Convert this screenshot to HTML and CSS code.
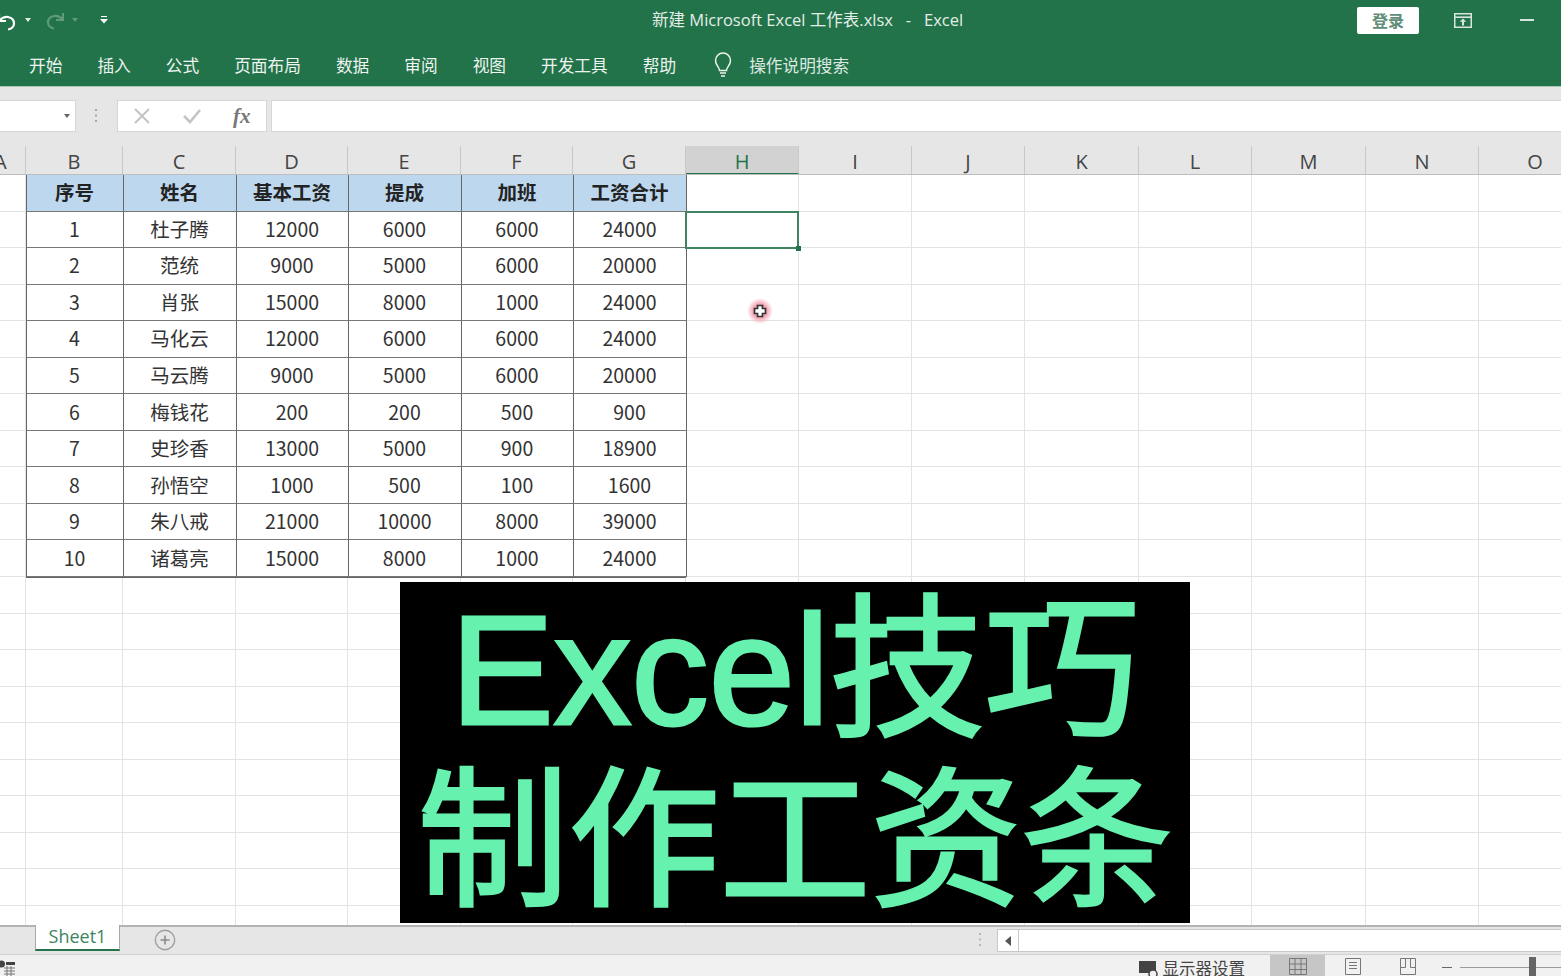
FILE: index.html
```html
<!DOCTYPE html>
<html lang="zh-CN">
<head>
  <meta charset="UTF-8">
  <title>新建 Microsoft Excel 工作表.xlsx - Excel</title>
  <link rel="stylesheet" href="styles.css">
</head>
<body>
  <!-- 标题栏 -->
  <header class="titlebar">
    <div class="qat">
      <svg class="qat-undo" width="19" height="20" viewBox="0 0 19 20"><path d="M1 3v7h7M1.500 9.500C4 6.500 7 5.500 10 6c4 .7 6 3.500 6 6.500s-2.500 5.500-6 6" fill="none" stroke="#fff" stroke-width="2.200"/></svg>
      <span class="caret"></span>
      <svg class="qat-redo" width="19" height="20" viewBox="0 0 19 20"><path d="M18 3v7h-7M17.500 9.500C15 6.500 12 5.500 9 6c-4 .7-6 3.500-6 6.500s2.500 5.500 6 6" fill="none" stroke="#5f9a7c" stroke-width="2.200"/></svg>
      <span class="caret caret-dim"></span>
      <svg class="qat-more" width="8" height="8" viewBox="0 0 8 8"><path d="M1 .5h6" stroke="#fff" stroke-width="1.200"/><path d="M0 3h8L4 7.500z" fill="#fff"/></svg>
    </div>
    <div class="doc-title">新建 Microsoft Excel 工作表.xlsx&nbsp;&nbsp;&nbsp;-&nbsp;&nbsp;&nbsp;Excel</div>
    <div class="win-controls">
      <button class="login">登录</button>
      <svg class="ribbon-opts" width="18" height="15" viewBox="0 0 18 15"><path d="M.75.75h16.500v13.500H.75z" fill="none" stroke="#d7e6dd" stroke-width="1.500"/><path d="M1 4.200h16" stroke="#d7e6dd" stroke-width="1.600"/><path d="M9 5.500l3.300 3.300H10v3.700H8V8.800H5.700z" fill="#d7e6dd"/></svg>
      <span class="minimize"></span>
    </div>
  </header>

  <!-- 功能区选项卡 -->
  <nav class="tabs">
    <span>开始</span>
    <span>插入</span>
    <span>公式</span>
    <span>页面布局</span>
    <span>数据</span>
    <span>审阅</span>
    <span>视图</span>
    <span>开发工具</span>
    <span>帮助</span>
    <span class="tell-me">
      <svg width="18" height="26" viewBox="0 0 18 26"><path d="M5.500 18.500c0-3.500-4-5-4-10a7.500 7.500 0 0 1 15 0c0 5-4 6.500-4 10z" fill="none" stroke="#eef4f0" stroke-width="1.500"/><path d="M6 21h6M7 24h4" stroke="#eef4f0" stroke-width="1.600"/></svg>
      操作说明搜索
    </span>
  </nav>

  <!-- 编辑栏 -->
  <div class="formula-bar">
    <div class="name-box"><span class="caret caret-gray"></span></div>
    <svg class="grip" width="4" height="15" viewBox="0 0 4 15"><path d="M2 1v2M2 6.500v2M2 12v2" stroke="#a8a8a8" stroke-width="2"/></svg>
    <div class="fx-box">
      <svg width="18" height="18" viewBox="0 0 18 18"><path d="M2 2l14 14M16 2L2 16" stroke="#c4c4c4" stroke-width="2"/></svg>
      <svg width="18" height="16" viewBox="0 0 18 16"><path d="M1 8l6 6L17 2" fill="none" stroke="#c4c4c4" stroke-width="2.600"/></svg>
      <span class="fx">fx</span>
    </div>
    <div class="formula-input"></div>
  </div>

  <!-- 列标 -->
  <div class="col-heads">
    <span class="col-a">A</span><span>B</span><span>C</span><span>D</span><span>E</span><span>F</span><span>G</span><span class="active">H</span><span>I</span><span>J</span><span>K</span><span>L</span><span>M</span><span>N</span><span>O</span>
  </div>

  <main class="sheet">
    <!-- 网格竖线 -->
    <div class="col-lines">
      <i></i><i></i><i></i><i></i><i></i><i></i><i></i><i></i><i></i><i></i><i></i><i></i><i></i><i></i><i></i>
    </div>

    <div class="pay-table">
      <div class="th">序号</div><div class="th">姓名</div><div class="th">基本工资</div><div class="th">提成</div><div class="th">加班</div><div class="th">工资合计</div>
      <div>1</div><div>杜子腾</div><div>12000</div><div>6000</div><div>6000</div><div>24000</div>
      <div>2</div><div>范统</div><div>9000</div><div>5000</div><div>6000</div><div>20000</div>
      <div>3</div><div>肖张</div><div>15000</div><div>8000</div><div>1000</div><div>24000</div>
      <div>4</div><div>马化云</div><div>12000</div><div>6000</div><div>6000</div><div>24000</div>
      <div>5</div><div>马云腾</div><div>9000</div><div>5000</div><div>6000</div><div>20000</div>
      <div>6</div><div>梅钱花</div><div>200</div><div>200</div><div>500</div><div>900</div>
      <div>7</div><div>史珍香</div><div>13000</div><div>5000</div><div>900</div><div>18900</div>
      <div>8</div><div>孙悟空</div><div>1000</div><div>500</div><div>100</div><div>1600</div>
      <div>9</div><div>朱八戒</div><div>21000</div><div>10000</div><div>8000</div><div>39000</div>
      <div>10</div><div>诸葛亮</div><div>15000</div><div>8000</div><div>1000</div><div>24000</div>
    </div>

    <div class="selection"><i class="handle"></i></div>

    <svg class="pointer" width="28" height="28" viewBox="0 0 28 28">
      <defs>
        <radialGradient id="halo">
          <stop offset="0.55" stop-color="#f5a9b8"/>
          <stop offset="1" stop-color="#f5a9b8" stop-opacity="0"/>
        </radialGradient>
      </defs>
      <circle cx="14" cy="14" r="13" fill="url(#halo)"/>
      <path d="M11.500 8.500h5v3h3v5h-3v3h-5v-3h-3v-5h3z" fill="#fff" stroke="#333" stroke-width="1.700"/>
    </svg>

    <div class="banner">
      <div class="banner-line banner-top">Excel技巧</div>
      <div class="banner-line">制作工资条</div>
    </div>
  </main>

  <!-- 工作表标签 -->
  <div class="sheet-tabs">
    <div class="tab-current">Sheet1</div>
    <svg class="add-sheet" width="22" height="22" viewBox="0 0 22 22"><circle cx="11" cy="11" r="9.700" fill="none" stroke="#a0a0a0" stroke-width="1.400"/><path d="M11 6.500v9M6.500 11h9" stroke="#8a8a8a" stroke-width="1.600"/></svg>
    <svg class="grip grip-right" width="4" height="15" viewBox="0 0 4 15"><path d="M2 1v2M2 6.500v2M2 12v2" stroke="#b5b5b5" stroke-width="2"/></svg>
    <div class="hscroll">
      <span class="hscroll-btn"><i></i></span>
      <span class="hscroll-track"></span>
    </div>
  </div>

  <!-- 状态栏 -->
  <footer class="statusbar">
    <svg class="macro" width="17" height="18" viewBox="0 0 17 18"><circle cx="2.500" cy="5" r="3.500" fill="#444"/><path d="M7 3h9v3H7z" fill="#444"/><path d="M5 9h11M5 12h11M5 15h11M8 7v11M12 7v11" stroke="#777"/></svg>
    <div class="display-set">
      <svg width="20" height="20" viewBox="0 0 20 20"><path d="M0 2h17v12H0z" fill="#444"/><circle cx="14" cy="15" r="4" fill="#f1f1f1" stroke="#444" stroke-width="1.500"/></svg>
      显示器设置
    </div>
    <div class="view-btn view-on"><svg width="18" height="20" viewBox="0 0 18 20"><path d="M.5 3.500h17v16H.5zM.5 9h17M.5 14.500h17M6 3.500v16M12 3.500v16" fill="none" stroke="#777"/></svg></div>
    <div class="view-btn"><svg width="16" height="20" viewBox="0 0 16 20"><path d="M.5 3.500h15v16H.5zM4 7.500h8M4 10.500h8M4 13.500h8" fill="none" stroke="#777"/></svg></div>
    <div class="view-btn"><svg width="16" height="20" viewBox="0 0 16 20"><path d="M.5 3.500h15v16H.5zM.5 12.500h5v-9M10.500 3.500v9h5" fill="none" stroke="#777"/></svg></div>
    <div class="zoom-slider"><span class="zoom-minus"></span><span class="zoom-track"><i></i></span></div>
  </footer>
</body>
</html>
```

FILE: styles.css
```css
* {
  box-sizing: border-box;
}

:root {
  --col-widths: 26px 97px 113px 112px 113px 112px 113px 113px 113px 113px 114px 113px 114px 113px 113px;
}

html, body {
  margin: 0;
  height: 976px;
  overflow: hidden;
}

body {
  display: flex;
  flex-direction: column;
  font-family: "Noto Sans CJK SC", "Noto Sans", sans-serif;
  background: #fff;
  color: #333;
}

/* 标题栏 */
.titlebar {
  height: 40px;
  background: #22734a;
  display: flex;
  align-items: center;
  color: #e4eee8;
}

.qat {
  width: 652px;
  display: flex;
  align-items: center;
}

.qat-undo {
  margin: 2px 0 0 -2px;
}

.caret {
  width: 0;
  height: 0;
  margin-left: 8px;
  border: 3.500px solid transparent;
  border-top: 4px solid #e4eee8;
  border-bottom: 0;
}

.caret-dim {
  border-top-color: #5f9a7c;
}

.qat-redo {
  margin-left: 14px;
}

.qat-more {
  margin-left: 22px;
}

.doc-title {
  padding-bottom: 2px;
  font-family: "Open Sans", "Noto Sans CJK SC", sans-serif;
  font-size: 16.500px;
  white-space: nowrap;
}

.win-controls {
  margin-left: auto;
  padding-right: 27px;
  display: flex;
  align-items: center;
}

.login {
  width: 62px;
  height: 27px;
  padding: 0;
  background: #fff;
  border: 0;
  border-radius: 2px;
  color: #5f8d76;
  font: 700 16px "Noto Sans CJK SC", sans-serif;
}

.ribbon-opts {
  margin-left: 35px;
}

.minimize {
  width: 14px;
  height: 2px;
  margin-left: 48px;
  background: #d7e6dd;
}

/* 选项卡 */
.tabs {
  height: 47px;
  padding: 3px 0 0 29px;
  background: #22734a;
  border-bottom: 1px solid #a9c9b7;
  display: flex;
  align-items: center;
  gap: 35px;
  font-size: 16.700px;
  color: #eef4f0;
}

.tell-me {
  margin-left: 3px;
  display: flex;
  align-items: center;
  gap: 17px;
  color: #dbe8e0;
}

/* 编辑栏 */
.formula-bar {
  height: 59px;
  padding: 13px 0 14px;
  background: #e6e6e6;
  display: flex;
}

.name-box {
  width: 76px;
  background: #fff;
  border: 1px solid #d6d6d6;
  border-left: 0;
  display: flex;
  align-items: center;
  justify-content: flex-end;
  padding-right: 5px;
}

.caret-gray {
  border-top-color: #666;
}

.grip {
  margin: 8px 0 0 18px;
}

.fx-box {
  width: 150px;
  margin-left: 19px;
  background: #fff;
  border: 1px solid #d6d6d6;
  display: flex;
  align-items: center;
  padding-left: 15px;
}

.fx-box svg + svg {
  margin-left: 32px;
}

.fx {
  margin-left: 32px;
  font: italic 700 21px "Liberation Serif", serif;
  color: #777;
}

.formula-input {
  flex: 1;
  margin-left: 4px;
  background: #fff;
  border: 1px solid #d6d6d6;
  border-right: 0;
}

/* 列标 */
.col-heads {
  height: 29px;
  background: #e6e6e6;
  border-bottom: 1px solid #bdbdbd;
  display: grid;
  grid-template-columns: var(--col-widths);
  overflow: hidden;
  font: 20px/32px "Open Sans", "Noto Sans", sans-serif;
  color: #444;
  text-align: center;
}

.col-heads span {
  border-right: 1px solid #c8c8c8;
}

.col-heads .col-a {
  text-align: left;
  text-indent: -6px;
  overflow: hidden;
}

.col-heads .active {
  height: 29px;
  background: #d2d2d2;
  border-bottom: 2px solid #22734a;
  color: #22734a;
}

/* 工作表区域 */
.sheet {
  height: 750px;
  position: relative;
  overflow: hidden;
  background-color: #fff;
  background-image: repeating-linear-gradient(180deg, transparent 0, transparent 35.550px, #e3e3e3 35.550px, #e3e3e3 36.550px);
}

.col-lines {
  position: absolute;
  top: 0;
  left: 0;
  bottom: 0;
  display: grid;
  grid-template-columns: var(--col-widths);
}

.col-lines i {
  border-right: 1px solid #e3e3e3;
}

.pay-table {
  width: 660px;
  margin-left: 25.500px;
  position: relative;
  display: grid;
  grid-template-columns: 97px 113px 112px 113px 112px 113px;
  grid-template-rows: repeat(11, 36.550px);
  background: #fff;
  border-left: 1.500px solid #666;
  border-bottom: 1.500px solid #666;
  font-size: 19.500px;
  color: #333;
}

.pay-table div {
  padding-bottom: 2px;
  display: flex;
  align-items: center;
  justify-content: center;
  border-right: 1.500px solid #666;
  border-bottom: 1.500px solid #777;
}

.pay-table .th {
  background: #bdd7ee;
  font-weight: 700;
  color: #222;
}

.selection {
  position: absolute;
  left: 685px;
  top: 35.500px;
  width: 114px;
  height: 38px;
  border: 2px solid #3f8460;
}

.handle {
  position: absolute;
  right: -4px;
  bottom: -4px;
  width: 5px;
  height: 5px;
  background: #22734a;
}

.pointer {
  position: absolute;
  left: 746px;
  top: 122px;
}

.banner {
  position: absolute;
  left: 400px;
  top: 407px;
  width: 790px;
  height: 341px;
  background: #000;
  color: #66f2ae;
  font-family: "Liberation Sans", "Noto Sans CJK SC", sans-serif;
  font-size: 151px;
  text-align: center;
  -webkit-text-stroke: 3px #66f2ae;
}

.banner-line {
  height: 165px;
  line-height: 165px;
  white-space: nowrap;
}

.banner-top {
  height: 177px;
  line-height: 177px;
  font-size: 155px;
}

/* 工作表标签 */
.sheet-tabs {
  height: 30px;
  background: #e6e6e6;
  border-top: 2px solid #b4b4b4;
  border-bottom: 1px solid #d0d0d0;
  display: flex;
  align-items: flex-start;
  position: relative;
}

.tab-current {
  width: 85px;
  height: 26px;
  margin: -2px 0 0 35px;
  background: #fff;
  border: 1px solid #a8a8a8;
  border-top: 0;
  border-bottom: 2px solid #22734a;
  font: 18px/22px "Open Sans", "Noto Sans", sans-serif;
  color: #3f8460;
  text-align: center;
}

.add-sheet {
  margin: 2px 0 0 34px;
}

.grip-right {
  margin: 5px 0 0 auto;
}

.hscroll {
  width: 564px;
  height: 23px;
  margin: 2px 0 0 15px;
  display: flex;
  background: #fff;
  border: 1px solid #c8c8c8;
  border-right: 0;
}

.hscroll-btn {
  width: 21px;
  border-right: 1px solid #c8c8c8;
  display: flex;
  align-items: center;
  justify-content: center;
}

.hscroll-btn i {
  border: 5px solid transparent;
  border-right: 6px solid #555;
  border-left: 0;
}

.hscroll-track {
  flex: 1;
}

/* 状态栏 */
.statusbar {
  height: 21px;
  background: #f1f1f1;
  display: flex;
  overflow: hidden;
  font-size: 16.500px;
  color: #444;
}

.macro {
  margin: 4px 0 0 -1px;
}

.display-set {
  margin-left: auto;
  display: flex;
  gap: 4px;
  height: 24px;
  line-height: 26px;
  white-space: nowrap;
}

.display-set svg {
  margin-top: 4px;
}

.view-btn {
  width: 55px;
  display: flex;
  justify-content: center;
}

.view-on {
  margin-left: 25px;
  background: #c6c6c6;
}

.zoom-slider {
  width: 126px;
  padding-left: 7px;
  display: flex;
  align-items: center;
  margin-top: 4px;
}

.zoom-minus {
  width: 10px;
  height: 1.500px;
  background: #666;
}

.zoom-track {
  flex: 1;
  height: 1px;
  margin-left: 8px;
  background: #999;
  position: relative;
}

.zoom-track i {
  position: absolute;
  left: 69px;
  top: -10px;
  width: 7px;
  height: 21px;
  background: #666;
}
```
